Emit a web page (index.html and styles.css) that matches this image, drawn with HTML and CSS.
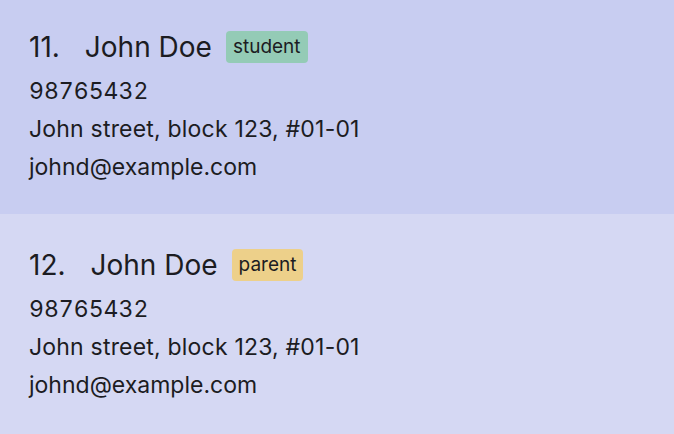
FILE: index.html
```html
<!DOCTYPE html>
<html>
<head>
<meta charset="utf-8">
<link rel="stylesheet" href="styles.css">
</head>
<body>
<div class="list">
  <div class="card card-odd">
    <div class="title">
      <span class="idx">11.</span>
      <span class="name">John Doe</span>
      <span class="tag tag-student">student</span>
    </div>
    <div class="line phone">98765432</div>
    <div class="line address">John street, block 123, #01-01</div>
    <div class="line">johnd@example.com</div>
  </div>
  <div class="card card-even">
    <div class="title">
      <span class="idx">12.</span>
      <span class="name">John Doe</span>
      <span class="tag tag-parent">parent</span>
    </div>
    <div class="line phone">98765432</div>
    <div class="line address">John street, block 123, #01-01</div>
    <div class="line">johnd@example.com</div>
  </div>
</div>
</body>
</html>
```
FILE: styles.css
```css
html, body {
  margin: 0;
  padding: 0;
  background: #d5d8f3;
}
body {
  font-family: Inter, "Noto Sans", sans-serif;
  color: #1c1c22;
  width: 674px;
  height: 434px;
  overflow: hidden;
}
.list {
  display: flex;
  flex-direction: column;
}
.card {
  padding: 25px 29px 0;
  display: flex;
  flex-direction: column;
  box-sizing: border-box;
}
.card-odd {
  background: #c8cdf1;
  height: 214px;
}
.card-even {
  background: #d5d8f3;
  height: 220px;
  padding-top: 29px;
}
.title {
  display: flex;
  align-items: center;
  height: 44px;
  margin-bottom: 3px;
  font-size: 28px;
}
.idx {
  margin-right: 25px;
}
.name {
  margin-right: 14px;
}
.tag {
  font-size: 19px;
  padding: 0 7px;
  height: 32px;
  line-height: 32px;
  border-radius: 4px;
}
.tag-student { background: #94cbb6; }
.tag-parent { background: #edd08a; }
.line {
  font-size: 23px;
  line-height: 38px;
}
.phone {
  font-feature-settings: "tnum";
}
.address {
  letter-spacing: 0.2px;
}
```
